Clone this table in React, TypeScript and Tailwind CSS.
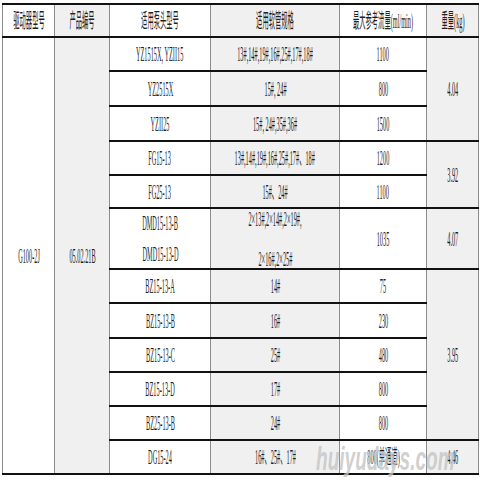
import React from 'react';

const rows = [
  { pump: ['YZ1515X, YZII15'], hose: ['13#,14#,19#,16#,25#,17#,18#'], flow: '1100', h: 'h-[34px]' },
  { pump: ['YZ2515X'], hose: ['15#, 24#'], flow: '800', h: 'h-[35px]' },
  { pump: ['YZII25'], hose: ['15#, 24#,35#,36#'], flow: '1500', h: 'h-[35px]' },
  { pump: ['FG15-13'], hose: ['13#,14#,19#,16#,25#,17#、18#'], flow: '1200', h: 'h-[34px]' },
  { pump: ['FG25-13'], hose: ['15#、24#'], flow: '1100', h: 'h-[33px]' },
  { pump: ['DMD15-13-B', 'DMD15-13-D'], hose: ['2×13#,2×14#,2×19#,', '2×16#,2×25#'], flow: '1035', h: 'h-[61px]' },
  { pump: ['BZ15-13-A'], hose: ['14#'], flow: '75', h: 'h-[34px]' },
  { pump: ['BZ15-13-B'], hose: ['16#'], flow: '230', h: 'h-[35px]' },
  { pump: ['BZ15-13-C'], hose: ['25#'], flow: '480', h: 'h-[34px]' },
  { pump: ['BZ15-13-D'], hose: ['17#'], flow: '800', h: 'h-[34px]' },
  { pump: ['BZ25-13-B'], hose: ['24#'], flow: '800', h: 'h-[34px]' },
  { pump: ['DG15-24'], hose: ['16#、25#、17#'], flow: '800(单通道)', h: 'h-[34px]' },
];

// weight cells: index of first row -> [rowSpan, value]
const weights: Record<number, [number, string]> = {
  0: [3, '4.04'],
  3: [2, '3.92'],
  5: [1, '4.07'],
  6: [5, '3.95'],
  11: [1, '4.46'],
};

function T({ children }: { children: React.ReactNode }) {
  return (
    <div className="flex justify-center">
      <span className="inline-block shrink-0 scale-x-35 scale-y-115 whitespace-nowrap">{children}</span>
    </div>
  );
}

const cell = 'border-x border-x-[#8c8c8c] border-y-2 border-y-[#111] p-0 text-center align-middle leading-[18px]';

export default function App() {
  return (
    <div className="relative w-[480px] h-[480px] bg-white overflow-hidden pt-[3px] pl-[2px]">
      <table
        className="table-fixed border-collapse w-[476px] text-[18px] text-[#1f1f1f]"
        style={{ fontFamily: '"Liberation Serif", "Noto Sans CJK SC", serif' }}
      >
        <colgroup>
          <col className="w-[52px]" />
          <col className="w-[55px]" />
          <col className="w-[101px]" />
          <col className="w-[129px]" />
          <col className="w-[87px]" />
          <col className="w-[52px]" />
        </colgroup>
        <thead>
          <tr className="h-[33px]">
            <th className={`${cell} font-normal bg-white`}><T>驱动器型号</T></th>
            <th className={`${cell} font-normal bg-[#f0f0f0]`}><T>产品编号</T></th>
            <th className={`${cell} font-normal bg-white`}><T>适用泵头型号</T></th>
            <th className={`${cell} font-normal bg-[#f0f0f0]`}><T>适用软管规格</T></th>
            <th className={`${cell} font-normal bg-white`}><T>最大参考流量(ml/min)</T></th>
            <th className={`${cell} font-normal bg-[#f0f0f0]`}><T>重量(kg)</T></th>
          </tr>
        </thead>
        <tbody>
          {rows.map((r, i) => (
            <tr key={i} className={r.h}>
              {i === 0 && (
                <>
                  <td rowSpan={12} className={`${cell} bg-white`}><T>G100-2J</T></td>
                  <td rowSpan={12} className={`${cell} bg-[#f0f0f0]`}><T>05.02.21B</T></td>
                </>
              )}
              <td className={`${cell} bg-white`}>
                <div className="flex flex-col gap-[13px]">
                  {r.pump.map((p, j) => (
                    <T key={j}>{p}</T>
                  ))}
                </div>
              </td>
              <td className={`${cell} bg-[#f0f0f0]`}>
                <div className="flex flex-col gap-[22px]">
                  {r.hose.map((p, j) => (
                    <T key={j}>{p}</T>
                  ))}
                </div>
              </td>
              <td className={`${cell} bg-white`}><T>{r.flow}</T></td>
              {weights[i] && (
                <td rowSpan={weights[i][0]} className={`${cell} bg-[#f0f0f0]`}><T>{weights[i][1]}</T></td>
              )}
            </tr>
          ))}
        </tbody>
      </table>
      <div
        className="absolute left-[316px] top-[438px] text-[34px] leading-[40px] font-bold italic text-[#c4c4c4]/80 whitespace-nowrap scale-x-56 origin-left"
        style={{ fontFamily: '"Liberation Sans", Arial, sans-serif' }}
      >
        huiyudays.com
      </div>
    </div>
  );
}
